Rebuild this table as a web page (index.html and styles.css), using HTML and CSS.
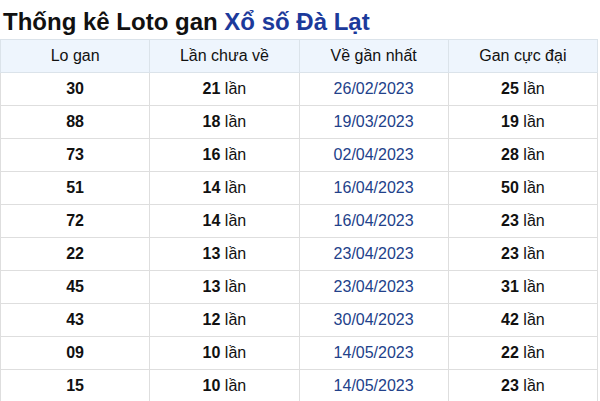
FILE: index.html
```html
<!DOCTYPE html>
<html>
<head>
<meta charset="utf-8">
<link rel="stylesheet" href="styles.css">
</head>
<body>
<h2 class="title">Thống kê Loto gan <span class="blue">Xổ số Đà Lạt</span></h2>
<table class="gan">
<thead>
<tr><th>Lo gan</th><th>Lần chưa về</th><th>Về gần nhất</th><th>Gan cực đại</th></tr>
</thead>
<tbody>
<tr><td><b>30</b></td><td><b>21</b> lần</td><td class="date">26/02/2023</td><td><b>25</b> lần</td></tr>
<tr><td><b>88</b></td><td><b>18</b> lần</td><td class="date">19/03/2023</td><td><b>19</b> lần</td></tr>
<tr><td><b>73</b></td><td><b>16</b> lần</td><td class="date">02/04/2023</td><td><b>28</b> lần</td></tr>
<tr><td><b>51</b></td><td><b>14</b> lần</td><td class="date">16/04/2023</td><td><b>50</b> lần</td></tr>
<tr><td><b>72</b></td><td><b>14</b> lần</td><td class="date">16/04/2023</td><td><b>23</b> lần</td></tr>
<tr><td><b>22</b></td><td><b>13</b> lần</td><td class="date">23/04/2023</td><td><b>23</b> lần</td></tr>
<tr><td><b>45</b></td><td><b>13</b> lần</td><td class="date">23/04/2023</td><td><b>31</b> lần</td></tr>
<tr><td><b>43</b></td><td><b>12</b> lần</td><td class="date">30/04/2023</td><td><b>42</b> lần</td></tr>
<tr><td><b>09</b></td><td><b>10</b> lần</td><td class="date">14/05/2023</td><td><b>22</b> lần</td></tr>
<tr><td><b>15</b></td><td><b>10</b> lần</td><td class="date">14/05/2023</td><td><b>23</b> lần</td></tr>
</tbody>
</table>
</body>
</html>
```
FILE: styles.css
```css
html, body {
  margin: 0;
  padding: 0;
  background: #fff;
}
body {
  font-family: "Liberation Sans", Arial, sans-serif;
  color: #111;
}
.title {
  margin: 0;
  padding: 7px 0 2px 3px;
  font-size: 24px;
  line-height: 30px;
  font-weight: bold;
  color: #111;
}
.blue {
  color: #1c3a9b;
}
.gan {
  width: 598px;
  border-collapse: collapse;
  table-layout: fixed;
  font-size: 16px;
}
.gan th, .gan td {
  border: 1px solid #dedede;
  text-align: center;
  height: 32px;
  padding: 0;
}
.gan th {
  font-weight: normal;
  background: #eef5fd;
  border-color: #dbe3ea;
}
.gan td b {
  font-weight: bold;
}
.gan td.date {
  color: #22418a;
}
```
